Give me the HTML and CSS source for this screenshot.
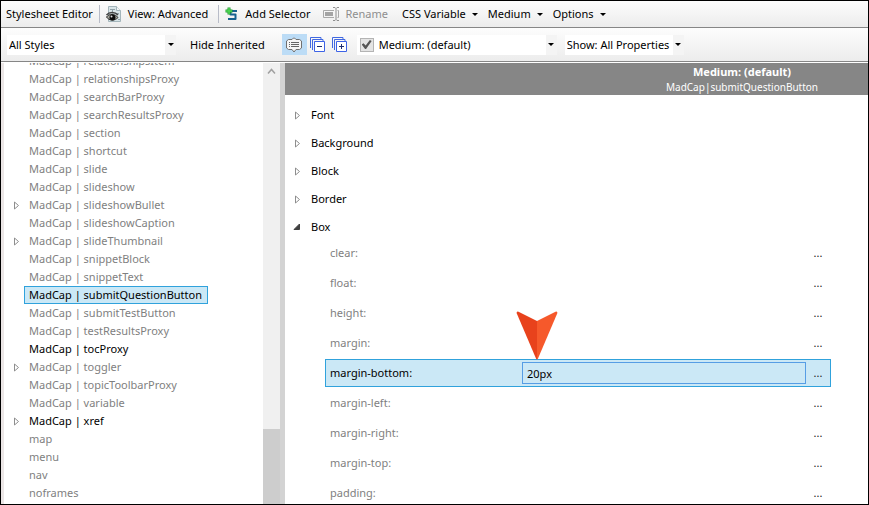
FILE: index.html
```html
<!DOCTYPE html>
<html lang="en">
<head>
<meta charset="utf-8">
<title>Stylesheet Editor</title>
<link rel="stylesheet" href="styles.css">
</head>
<body>
<div class="editor">
  <div class="toolbar toolbar-main">
    <span class="title">Stylesheet Editor</span>
    <span class="divider"></span>
    <button class="tool" type="button">
      <svg class="icon" width="16" height="18" viewBox="0 0 16 18">
        <path d="M2.500 1.500h8l4 4v11h-12z" fill="#d9e5e8" stroke="#a3b5bb"/>
        <path d="M10.500 1.500v4h4" fill="#f4f7f8" stroke="#a3b5bb"/>
        <path d="M4 4.500h5M6.500 4.500v4M10 8.500h3M12 14.500h2" stroke="#8fa0a7" fill="none"/>
        <path d="M0.500 10C3 6.500 9 6.500 12 10" stroke="#444" stroke-width="1.500" fill="none"/>
        <path d="M0.500 12C3 8.500 9 8.500 12 12.500C9 16 3 16 0.500 12z" fill="#a9a9a0" stroke="#2c2c2a"/>
        <circle cx="6.500" cy="12.500" r="3" fill="#0b0b0b"/>
        <circle cx="5.500" cy="11.500" r="1" fill="#ddd"/>
      </svg>
      View: Advanced</button>
    <span class="divider"></span>
    <button class="tool" type="button">
      <svg class="icon" width="14" height="14" viewBox="0 0 14 14">
        <path d="M12 4H5.500V7.500H10.500V12H3" stroke="#17618f" stroke-width="2" stroke-linejoin="round" fill="none"/>
        <path d="M4 0.500v7M0.500 4h7" stroke="#1f9b2c" stroke-width="3" fill="none"/>
        <path d="M4 1v6M1 4h6" stroke="#4fd654" stroke-width="1.500" fill="none"/>
      </svg>
      Add Selector</button>
    <button class="tool" type="button" disabled>
      <svg class="icon" width="17" height="14" viewBox="0 0 17 14">
        <path d="M11 3.500H0.500v7H11M14.500 3.500h1v7h-1" stroke="#a9a9a9" fill="none"/>
        <path d="M2 5h8v4H2z" fill="#a4a4a4"/>
        <path d="M10 0.500h2l1 1 1-1h2M13 1.500v11M10 13.500h2l1-1 1 1h2" stroke="#8e8e8e" fill="none"/>
      </svg>
      Rename</button>
    <button class="menu" type="button">CSS Variable</button>
    <button class="menu" type="button">Medium</button>
    <button class="menu" type="button">Options</button>
  </div>

  <div class="toolbar toolbar-filter">
    <span class="picker picker-styles"><select aria-label="Style filter"><option>All Styles</option></select></span>
    <button class="tool hide-inherited" type="button">Hide Inherited</button>
    <div class="views">
      <button class="view view-on" type="button" aria-label="Grouped view">
        <svg width="16" height="16" viewBox="0 0 16 16">
          <path d="M2.500 2.500h3.500l1.500-1.500h1l1.500 1.500h3.500l2 1.500v7l-2 1.500h-3.500l-2 2.500-2-2.500h-3.500l-2-1.500v-7z" fill="#f6f6f6" stroke="#707070"/>
          <path d="M3 5.500h1M3 7.500h1M3 9.500h1M5 5.500h8M5 7.500h8M5 9.500h8" stroke="#666"/>
        </svg>
      </button>
      <button class="view" type="button" aria-label="Collapse all">
        <svg width="16" height="16" viewBox="0 0 16 16">
          <path d="M0.500 11V0.500H11V2M2.500 13V2.500H13V4" fill="none" stroke="#4169e1"/>
          <path d="M4.500 4.500h10v10h-10z" fill="#fff" stroke="#3d63e6"/>
          <path d="M7 9.500h5" stroke="#1c2c70"/>
        </svg>
      </button>
      <button class="view" type="button" aria-label="Expand all">
        <svg width="16" height="16" viewBox="0 0 16 16">
          <path d="M0.500 11V0.500H11V2M2.500 13V2.500H13V4" fill="none" stroke="#4169e1"/>
          <path d="M4.500 4.500h10v10h-10z" fill="#fff" stroke="#3d63e6"/>
          <path d="M7 9.500h5M9.500 7v5" stroke="#1c2c70"/>
        </svg>
      </button>
    </div>
    <div class="medium">
      <input type="checkbox" checked aria-label="Use medium">
      <span class="picker picker-medium"><select aria-label="Medium"><option>Medium: (default)</option></select></span>
    </div>
    <span class="picker picker-show"><select aria-label="Show properties"><option>Show: All Properties</option></select></span>
  </div>

  <div class="body">
    <div class="tree">
      <ul>
        <li><span>MadCap | relationshipsItem</span></li>
        <li><span>MadCap | relationshipsProxy</span></li>
        <li><span>MadCap | searchBarProxy</span></li>
        <li><span>MadCap | searchResultsProxy</span></li>
        <li><span>MadCap | section</span></li>
        <li><span>MadCap | shortcut</span></li>
        <li><span>MadCap | slide</span></li>
        <li><span>MadCap | slideshow</span></li>
        <li><svg class="twist" width="6" height="9" viewBox="0 0 6 9"><path d="M0.500 1l4 3.500-4 3.500z"/></svg><span>MadCap | slideshowBullet</span></li>
        <li><span>MadCap | slideshowCaption</span></li>
        <li><svg class="twist" width="6" height="9" viewBox="0 0 6 9"><path d="M0.500 1l4 3.500-4 3.500z"/></svg><span>MadCap | slideThumbnail</span></li>
        <li><span>MadCap | snippetBlock</span></li>
        <li><span>MadCap | snippetText</span></li>
        <li class="selected"><span>MadCap | submitQuestionButton</span></li>
        <li><span>MadCap | submitTestButton</span></li>
        <li><span>MadCap | testResultsProxy</span></li>
        <li class="styled"><span>MadCap | tocProxy</span></li>
        <li><svg class="twist" width="6" height="9" viewBox="0 0 6 9"><path d="M0.500 1l4 3.500-4 3.500z"/></svg><span>MadCap | toggler</span></li>
        <li><span>MadCap | topicToolbarProxy</span></li>
        <li><span>MadCap | variable</span></li>
        <li class="styled"><svg class="twist" width="6" height="9" viewBox="0 0 6 9"><path d="M0.500 1l4 3.500-4 3.500z"/></svg><span>MadCap | xref</span></li>
        <li><span>map</span></li>
        <li><span>menu</span></li>
        <li><span>nav</span></li>
        <li><span>noframes</span></li>
      </ul>
    </div>
    <div class="scrollbar">
      <svg width="17" height="17" viewBox="0 0 17 17"><path d="M5 10.500l3.500-4 3.500 4" fill="none" stroke="#a0a0a0" stroke-width="1.500"/></svg>
      <div class="thumb"></div>
    </div>
    <div class="splitter"></div>
    <div class="properties">
      <div class="heading">
        <strong>Medium: (default)</strong>
        <span>MadCap|submitQuestionButton</span>
      </div>
      <div class="groups">
        <button class="group" type="button" aria-expanded="false"><svg class="twist" width="6" height="9" viewBox="0 0 6 9"><path d="M0.500 1l4 3.500-4 3.500z"/></svg>Font</button>
        <button class="group" type="button" aria-expanded="false"><svg class="twist" width="6" height="9" viewBox="0 0 6 9"><path d="M0.500 1l4 3.500-4 3.500z"/></svg>Background</button>
        <button class="group" type="button" aria-expanded="false"><svg class="twist" width="6" height="9" viewBox="0 0 6 9"><path d="M0.500 1l4 3.500-4 3.500z"/></svg>Block</button>
        <button class="group" type="button" aria-expanded="false"><svg class="twist" width="6" height="9" viewBox="0 0 6 9"><path d="M0.500 1l4 3.500-4 3.500z"/></svg>Border</button>
        <button class="group open" type="button" aria-expanded="true"><svg class="twist" width="8" height="8" viewBox="0 0 8 8"><path d="M6.500 1v5.500H1z"/></svg>Box</button>
      </div>
      <div class="rows">
        <div class="row"><label for="p-clear">clear:</label><input id="p-clear" type="text"><button type="button">...</button></div>
        <div class="row"><label for="p-float">float:</label><input id="p-float" type="text"><button type="button">...</button></div>
        <div class="row"><label for="p-height">height:</label><input id="p-height" type="text"><button type="button">...</button></div>
        <div class="row"><label for="p-margin">margin:</label><input id="p-margin" type="text"><button type="button">...</button></div>
        <div class="row active"><label for="p-mb">margin-bottom:</label><input id="p-mb" type="text" value="20px"><button type="button">...</button>
          <svg class="pointer" width="42" height="49" viewBox="0 0 42 49">
            <path d="M21 10L2.500 0.700Q0 0.200 0.800 2.500L20 47.500Q20.500 48.500 21 48.500z" fill="#e8421c"/>
            <path d="M21 10L39.500 0.700Q42 0.200 41.200 2.500L22 47.500Q21.500 48.500 21 48.500z" fill="#f6592b"/>
          </svg>
        </div>
        <div class="row"><label for="p-ml">margin-left:</label><input id="p-ml" type="text"><button type="button">...</button></div>
        <div class="row"><label for="p-mr">margin-right:</label><input id="p-mr" type="text"><button type="button">...</button></div>
        <div class="row"><label for="p-mt">margin-top:</label><input id="p-mt" type="text"><button type="button">...</button></div>
        <div class="row"><label for="p-pad">padding:</label><input id="p-pad" type="text"><button type="button">...</button></div>
      </div>
    </div>
  </div>
</div>
</body>
</html>
```
FILE: styles.css
```css
* {
  box-sizing: border-box;
}

body {
  margin: 0;
  font: 11px/18px "Noto Sans", "Open Sans", sans-serif;
  color: #000;
}

button,
input,
select {
  margin: 0;
  padding: 0;
  border: 0;
  background: none;
  color: inherit;
  font: inherit;
}

.editor {
  display: flex;
  flex-direction: column;
  height: 100vh;
  overflow: hidden;
  border: 1px solid #000;
  background: #fff;
}

.toolbar {
  display: flex;
  flex: none;
  align-items: center;
  white-space: nowrap;
  background: linear-gradient(#fdfdfd, #ececec);
  border-bottom: 1px solid #868686;
}

.toolbar-main {
  height: 27px;
  padding-left: 5px;
}

.toolbar-filter {
  height: 34px;
  padding-left: 6px;
}

.divider {
  width: 1px;
  height: 18px;
  margin: 0 6px;
  background: #b8bcc8;
}

.tool {
  display: flex;
  align-items: center;
  gap: 6px;
  margin-right: 4px;
}

.tool + .tool {
  margin-left: 8px;
}

.tool:disabled {
  color: #8e8e8e;
}

.menu {
  display: flex;
  align-items: center;
  gap: 6px;
  margin-left: 10px;
}

.menu::after,
.picker::after {
  content: "";
  border: 3px solid transparent;
  border-top-color: #000;
  border-bottom: 0;
}

.picker {
  display: grid;
  grid-template-columns: 1fr 11px;
  align-items: center;
  height: 20px;
  background: #fff;
}

.picker select {
  grid-area: 1 / 1 / 2 / 3;
  width: 100%;
  height: 20px;
  padding: 0 14px 0 2px;
  appearance: none;
  background: linear-gradient(#f4f4f4, #f4f4f4) right / 11px 100% no-repeat;
}

.picker::after {
  grid-area: 1 / 2;
  justify-self: center;
  pointer-events: none;
}

.picker-styles {
  width: 169px;
}

.hide-inherited {
  margin: 0 17px 0 14px;
}

.views {
  display: flex;
}

.view {
  display: grid;
  place-items: center;
  width: 22px;
  height: 21px;
}

.view-on {
  width: 25px;
  background: #bcdcf6;
}

.medium {
  display: flex;
  align-items: center;
  gap: 3px;
  width: 200px;
  height: 20px;
  margin: 0 8px 0 6px;
  padding-left: 3px;
  background: #fff;
}

.medium input {
  display: grid;
  place-items: center;
  appearance: none;
  width: 14px;
  height: 14px;
  border: 1px solid #b4b4b4;
  background: #e4e4e4;
}

.medium input:checked::before {
  content: "";
  width: 10px;
  height: 9px;
  background: #555;
  clip-path: polygon(0 50%, 18% 36%, 40% 62%, 82% 0, 100% 12%, 44% 100%, 34% 100%);
}

.picker-medium {
  flex: 1;
}

.body {
  display: flex;
  flex: 1;
  min-height: 0;
  padding-top: 1px;
}

.tree {
  display: flex;
  flex-direction: column;
  justify-content: flex-end;
  flex: 0 0 262px;
  overflow: hidden;
  padding-bottom: 2px;
  border-left: 3px solid #ebe6e6;
  color: #7f7f7f;
}

.tree ul {
  margin: 0;
  padding: 0;
  list-style: none;
}

.tree li {
  display: grid;
  grid-template-columns: 10px 1fr;
  align-items: center;
  justify-items: start;
  height: 18px;
  padding-left: 10px;
}

.tree li span {
  grid-column: 2;
  grid-row: 1;
  height: 18px;
  padding: 0 5px 0 4px;
  border: 1px solid transparent;
  line-height: 16px;
}

.tree .styled {
  color: #000;
}

.tree .selected span {
  border-color: #30a2dc;
  background: #cbe8f6;
  color: #000;
}

.twist {
  fill: #fff;
  stroke: #8e8e8e;
}

.scrollbar {
  display: flex;
  flex-direction: column;
  justify-content: space-between;
  flex: 0 0 17px;
  background: #f0f0f0;
}

.thumb {
  height: 17%;
  background: #cdcdcd;
}

.splitter {
  flex: 0 0 5px;
  background: #d3d3d3;
}

.properties {
  flex: 1;
  min-width: 0;
  overflow: hidden;
}

.heading {
  display: flex;
  flex-direction: column;
  align-items: center;
  min-width: 914px;
  height: 32px;
  background: #868686;
  color: #fff;
  font-size: 10px;
  line-height: 14px;
}

.heading strong {
  font-size: 11px;
  line-height: 17px;
}

.groups {
  display: flex;
  flex-direction: column;
  gap: 4px;
  padding: 8px 0 0 10px;
}

.group {
  display: grid;
  grid-template-columns: 6px 1fr;
  gap: 10px;
  align-items: center;
  justify-items: start;
  height: 24px;
  text-align: left;
}

.open .twist {
  justify-self: end;
  fill: #404040;
  stroke: #404040;
}

.rows {
  display: flex;
  flex-direction: column;
  gap: 2px;
  margin: 0 37px 0 40px;
  color: #7f7f7f;
}

.row {
  position: relative;
  display: grid;
  grid-template-columns: 192px 1fr 24px;
  align-items: center;
  height: 28px;
  padding-left: 4px;
  border: 1px solid transparent;
}

.row input {
  width: 100%;
  height: 22px;
  padding: 0 4px;
  border: 1px solid transparent;
}

.row button {
  color: #222;
}

.active {
  border-color: #30a2dc;
  background: #cbe8f6;
  color: #000;
}

.active input {
  border-color: #569de5;
}

.pointer {
  position: absolute;
  bottom: 100%;
  left: 190px;
}
```
